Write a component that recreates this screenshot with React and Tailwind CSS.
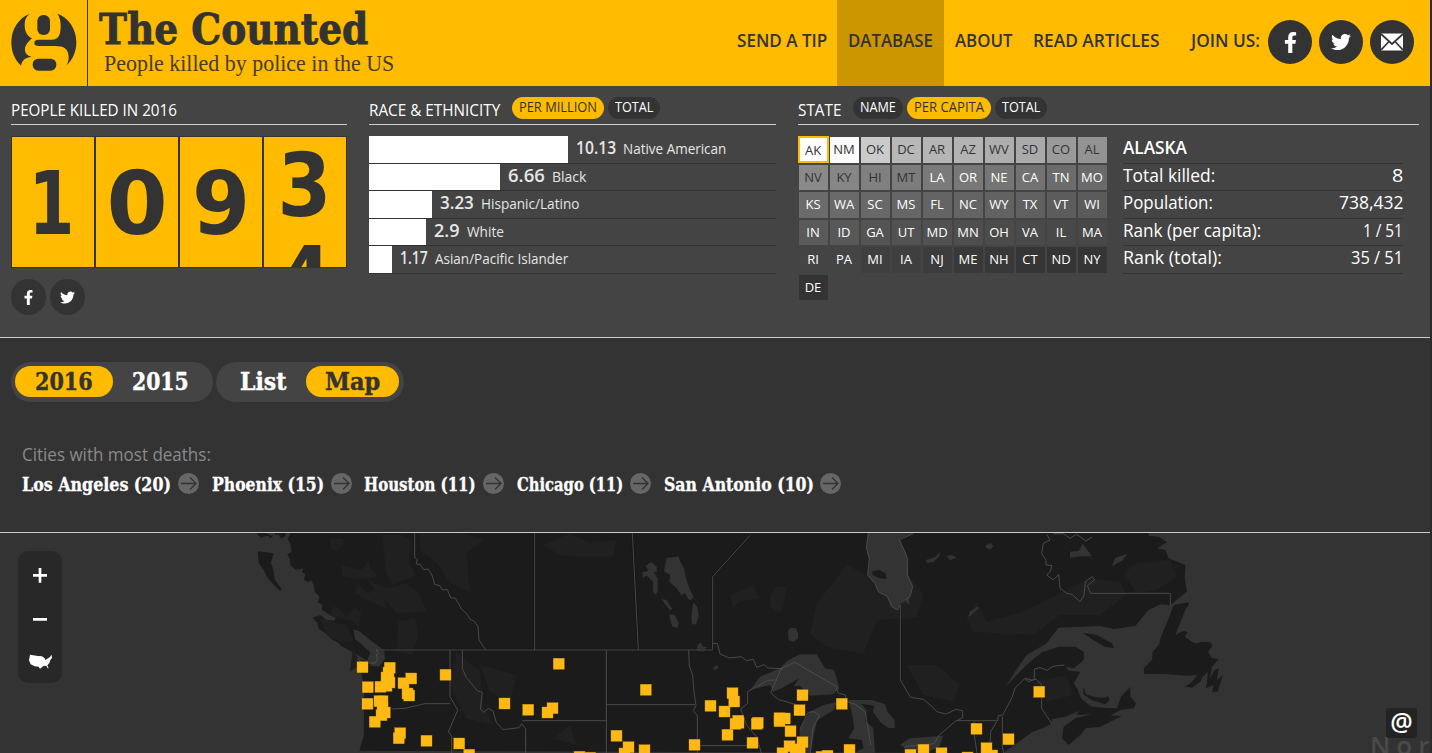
import { useLayoutEffect, useRef, useState } from "react";
import { FaFacebookF, FaTwitter } from "react-icons/fa";

// A line of text condensed or widened to a fixed measure.
function Fit({ w, className = "", children }) {
  const ref = useRef(null);
  const [scale, setScale] = useState(1);
  useLayoutEffect(() => {
    setScale(w / ref.current.offsetWidth);
  }, [w]);
  return (
    <span className={`inline-block whitespace-nowrap ${className}`} style={{ width: w }}>
      <span ref={ref} className="inline-block origin-left" style={{ transform: `scaleX(${scale})` }}>
        {children}
      </span>
    </span>
  );
}

const SERIF = "font-['DejaVu_Serif_Condensed','DejaVu_Serif',serif]";

function GuardianLogo() {
  return (
    <svg className="mt-3 h-[60px] w-[66px]" viewBox="32 36 198 180" fill="#333">
      <path d="M88 41C54 55 33 88 33 127c0 29 11 53 29 70 3-17 12-24 32-27-13-3-20-10-20-21 0-14 9-23 21-34-14-6-22-20-22-39 0-15 4-26 15-35z" />
      <path d="M171 41c34 12 57 46 57 86 0 28-11 53-30 70 5-8 7-16 7-26 0-24-14-33-40-33h-49c-9 0-14-3-14-9 0-7 5-10 14-10h38c22 0 27-16 27-42 0-14-3-27-10-36z" />
      <rect x="111" y="45" width="38" height="60" rx="18" />
      <rect x="97" y="176" width="71" height="36" rx="17" />
    </svg>
  );
}

function MailIcon() {
  return (
    <svg className="h-[18px] w-[22px]" viewBox="0 0 22 18">
      <rect width="22" height="17" y="0.5" fill="#fff" />
      <path d="M0 1l11 10L22 1M0 17l8-8.500M22 17l-8-8.500" fill="none" stroke="#333" strokeWidth="1.700" />
    </svg>
  );
}

function Header() {
  return (
    <header className="flex h-[86px] bg-[#ffbb00] text-[#333]">
      <div className="flex w-[88px] shrink-0 border-r border-[#333] pl-[11px]">
        <GuardianLogo />
      </div>
      <div className="flex flex-col pt-[9px] pl-[11px]">
        <h1 className={`h-[40px] text-[43px] leading-[41px] font-bold [-webkit-text-stroke:0.8px_#333] ${SERIF}`}>
          <Fit w={269}>The Counted</Fit>
        </h1>
        <p className="pl-[5px] font-['Liberation_Serif',serif] text-[24px] leading-7 text-[#483b24]">
          <Fit w={290}>People killed by police in the US</Fit>
        </p>
      </div>
      <nav className="ml-auto flex text-[18px] leading-[81px] font-semibold">
        <a className="pr-[10px]"><Fit w={90}>SEND A TIP</Fit></a>
        <a className="w-[107px] bg-[#cc9600] pl-[11px]"><Fit w={85}>DATABASE</Fit></a>
        <a className="pl-[11px]"><Fit w={57}>ABOUT</Fit></a>
        <a className="pl-[21px]"><Fit w={127}>READ ARTICLES</Fit></a>
        <span className="pl-[31px]"><Fit w={69}>JOIN US:</Fit></span>
      </nav>
      <div className="flex gap-[7px] pt-5 pr-4 pl-2 text-white">
        <a className="flex size-11 items-center justify-center rounded-full bg-[#333]"><FaFacebookF size={21} /></a>
        <a className="flex size-11 items-center justify-center rounded-full bg-[#333]"><FaTwitter size={20} /></a>
        <a className="flex size-11 items-center justify-center rounded-full bg-[#333]"><MailIcon /></a>
      </div>
    </header>
  );
}

function Pill({ w, active, children }) {
  return (
    <button className={`flex h-[22px] rounded-full px-[7px] text-[14px] leading-[20px] ${active ? "bg-[#ffbb00] text-[#333]" : "bg-[#333] text-white"}`}>
      <Fit w={w}>{children}</Fit>
    </button>
  );
}

function PanelHead({ children }) {
  return <div className="flex h-[39px] items-start border-b border-[#ccc] text-[16px] leading-[48px]">{children}</div>;
}

function Digit({ children }) {
  return (
    <div className="h-[132px] w-[84px] overflow-hidden border border-[#333] bg-[#ffbb00] text-center font-['DejaVu_Sans',sans-serif] text-[88px] font-bold text-[#333]">
      {children}
    </div>
  );
}

function KilledPanel() {
  return (
    <section className="w-[336px]">
      <PanelHead><Fit w={166}>PEOPLE KILLED IN 2016</Fit></PanelHead>
      <div className="mt-[11px] flex">
        <Digit><div className="scale-x-75 pr-[4px] leading-[133px]">1</div></Digit>
        <Digit><div className="leading-[133px]">0</div></Digit>
        <Digit><div className="scale-x-95 leading-[133px]">9</div></Digit>
        <Digit>
          <div className="scale-x-88 pr-px leading-[98px]">3</div>
          <div className="scale-x-88 leading-[88px]">4</div>
        </Digit>
      </div>
      <div className="mt-[11px] flex gap-1">
        <a className="flex h-[36px] w-[35px] items-center justify-center rounded-full bg-[#333]"><FaFacebookF size={15} /></a>
        <a className="flex h-[36px] w-[35px] items-center justify-center rounded-full bg-[#333]"><FaTwitter size={15} /></a>
      </div>
    </section>
  );
}

const RACES = [
  { bar: 199, value: "10.13", vw: 40, label: "Native American", lw: 103 },
  { bar: 131, value: "6.66", vw: 37, label: "Black", lw: 34 },
  { bar: 63, value: "3.23", vw: 34, label: "Hispanic/Latino", lw: 98 },
  { bar: 57, value: "2.9", vw: 26, label: "White", lw: 37 },
  { bar: 23, value: "1.17", vw: 28, label: "Asian/Pacific Islander", lw: 133 },
];

function RacePanel() {
  return (
    <section className="ml-[22px] w-[407px]">
      <PanelHead>
        <Fit w={131}>RACE &amp; ETHNICITY</Fit>
        <div className="mt-[11px] ml-3 flex gap-1">
          <Pill w={78} active>PER MILLION</Pill>
          <Pill w={38}>TOTAL</Pill>
        </div>
      </PanelHead>
      <div className="mt-[11.25px]">
        {RACES.map((r) => (
          <div key={r.label} className="flex h-[27.5px] border-b border-[#333]">
            <div className="h-full bg-white" style={{ width: r.bar }} />
            <div className="flex items-baseline gap-[7px] pl-[8px] leading-[23px] text-[#e6e6e6]">
              <Fit w={r.vw} className="text-[18px] font-semibold">{r.value}</Fit>
              <Fit w={r.lw} className="text-[14px]">{r.label}</Fit>
            </div>
          </div>
        ))}
      </div>
    </section>
  );
}

const STATES = "AK NM OK DC AR AZ WV SD CO AL NV KY HI MT LA OR NE CA TN MO KS WA SC MS FL NC WY TX VT WI IN ID GA UT MD MN OH VA IL MA RI PA MI IA NJ ME NH CT ND NY DE".split(" ");
const SHADES = "ff fa cb b8 b5 b3 ae aa 9a 93 8a 86 80 7c 7a 78 75 72 6c 6a 6b 6a 68 66 64 64 62 60 5c 5b 5a 58 54 52 51 4e 4b 4a 49 48 44 44 3f 3f 3c 39 38 35 35 35 33".split(" ");

const DETAILS = [
  ["Total killed:", 92, "8", 11],
  ["Population:", 90, "738,432", 64],
  ["Rank (per capita):", 138, "1 / 51", 40],
  ["Rank (total):", 99, "35 / 51", 52],
];

function StatePanel() {
  return (
    <section className="ml-[22px] w-[621px]">
      <PanelHead>
        <Fit w={43}>STATE</Fit>
        <div className="mt-[11px] ml-3 flex gap-1">
          <Pill w={36}>NAME</Pill>
          <Pill w={70} active>PER CAPITA</Pill>
          <Pill w={38}>TOTAL</Pill>
        </div>
      </PanelHead>
      <div className="flex">
        <div className="mt-[12.25px] ml-px grid h-[163px] w-[308px] grid-cols-[repeat(10,29px)] gap-x-[2px] auto-rows-[25.5px] gap-y-[2px] text-center text-[13px] leading-[24px]">
          {STATES.map((s, i) => (
            <div
              key={s}
              className={`pr-px ${i === 0 ? "-mt-px -ml-px h-[27px] w-[31px] border-2 border-[#ffbb00]" : ""} ${i < 14 ? "text-[#333]" : "text-white"}`}
              style={{ backgroundColor: `#${SHADES[i].repeat(3)}` }}
            >
              {s}
            </div>
          ))}
        </div>
        <div className="mt-[11.25px] ml-[16px] w-[280px] text-[18px] leading-[23px]">
          <div className="h-[27.5px] border-b border-[#333] font-semibold"><Fit w={64}>ALASKA</Fit></div>
          {DETAILS.map(([k, kw, v, vw]) => (
            <div key={k} className="flex h-[27.5px] justify-between border-b border-[#333]">
              <Fit w={kw}>{k}</Fit>
              <Fit w={vw}>{v}</Fit>
            </div>
          ))}
        </div>
      </div>
    </section>
  );
}

const CITIES = [
  ["Los Angeles (20)", 149],
  ["Phoenix (15)", 112],
  ["Houston (11)", 112],
  ["Chicago (11)", 106.5],
  ["San Antonio (10)", 149.5],
];

function Controls() {
  return (
    <section className="h-[195px] border-b border-[#ccc] pt-6">
      <div className={`flex gap-[3px] pl-[11px] text-[25px] leading-[32px] font-bold [-webkit-text-stroke-width:0.4px] ${SERIF}`}>
        <div className="flex h-10 w-[202px] rounded-full bg-[#444] p-1">
          <div className="h-[31px] w-[98px] rounded-full bg-[#ffbb00] pl-5 text-[#333]"><Fit w={58}>2016</Fit></div>
          <div className="pl-[19px]"><Fit w={57}>2015</Fit></div>
        </div>
        <div className="flex h-10 w-[188px] rounded-full bg-[#444] py-1">
          <div className="w-[90px] pl-6"><Fit w={46}>List</Fit></div>
          <div className="h-[31px] w-[93px] rounded-full bg-[#ffbb00] pl-[19px] text-[#333]"><Fit w={55}>Map</Fit></div>
        </div>
      </div>
      <p className="mt-[40px] pl-[22px] text-[18px] leading-[25px] text-[#8a8a8a]"><Fit w={189}>Cities with most deaths:</Fit></p>
      <div className={`mt-[6px] flex gap-[12.5px] pl-[22px] text-[18px] leading-[23px] font-bold [-webkit-text-stroke:0.3px_#fff] ${SERIF}`}>
        {CITIES.map(([name, w]) => (
          <a key={name} className="flex gap-[7px]">
            <Fit w={w}>{name}</Fit>
            <svg className="size-[21px]" viewBox="0 0 21 21">
              <circle cx="10.5" cy="10.5" r="10.5" fill="#666" />
              <path d="M3 10.500h14.500M12 4.500l6 6-6 6" fill="none" stroke="#333" strokeWidth="1.300" />
            </svg>
          </a>
        ))}
      </div>
    </section>
  );
}

// Upper-left corners of the incident markers, in map units (3 per pixel).
const MARKERS = [
  [1071,410],[1087,470],[1086,520],[1153,412],[1149,426],[1143,441],[1125,469],[1143,466],[1152,456],[1122,512],[1131,512],[1131,531],[1138,546],[1108,574],[1128,554],
  [1194,458],[1217,444],[1206,489],[1211,495],[1320,433],[1180,623],[1184,608],[1263,631],[1361,639],[1391,673],[1497,519],[1568,538],[1626,546],[1641,533],[1660,400],[1921,478],[1833,616],[1869,650],[1857,669],[1917,659],[1722,679],[1754,682],[2067,643],[2115,526],[2157,543],[2181,488],[2186,513],[2190,580],[2198,571],[2199,577],[2166,613],[2241,637],
  [2254,580],[2257,577],[2322,563],[2322,572],[2338,564],[2355,602],[2382,539],[2391,494],[2391,635],[2352,647],[2331,668],[2370,658],[2383,656],[2448,679],[2466,676],[2509,520],[2532,658],[2715,673],[2754,658],[2808,668],[2913,595],[3009,626],[2943,653],[2960,675],[2886,681],[3101,484],
];

function MapDrawing() {
  return (
    <svg className="block h-[220px] w-[1430px]" viewBox="0 24 4290 660">
      <g fill="#1b1b1b">
        <path d="M872 24l-9 18 8 14 4 24-13 8 8 16 2 18 16 13 22-5-4 10 10 8-4 17 13 7 8-6 8 14 4 22 13 13-5 17 15 8-3 15 24 14 18 10-4 8-24-3-18-14-23 8 12 14 7 20 22 14 18 18 16 8 12 12 20 10 28 16 24 14 22 3 16 6-64-10 12 40 10 50-2 140-13 44L3010 684 3050 655 3096 622 3126 610 3154 597 3156 583 3196 575 3236 558 3230 570 3276 568 3226 580 3191 605 3186 640 3206 660 3246 625 3256 610 3301 605 3366 573 3331 572 3361 555 3401 550 3408 535 3391 515 3391 485 3363 515 3351 550 3311 548 3276 545 3261 535 3243 520 3231 490 3221 475 3241 440 3206 437 3196 425 3221 430 3251 405 3251 380 3226 365 3176 365 3126 382 3090 410 3050 450 3015 487 3045 440 3080 390 3140 355 3175 308 3300 303 3341 312 3406 303 3446 255 3481 238 3511 240 3561 200 3554 160 3556 120 3506 100 3496 75 3471 70 3501 52 3476 35 3446 32 3446 24z" />
        <path d="M773 79l48 6-8 28 8 24 2 24 22 32-4 4-22-20-16-18-10-20-17-26zM770 24l12 14 22-6 8 8 16-16h30l-4 12-12 4-6-12-22 4-16-8z" />
        <path d="M3566 232L3521 240 3506 280 3481 340 3478 358 3458 380 3456 405 3431 430 3433 447 3496 447 3561 452 3591 450 3576 470 3556 485 3576 488 3601 470 3608 455 3624 440 3622 460 3618 490 3641 480 3636 500 3653 500 3669 450 3651 465 3656 430 3644 435 3630 460 3636 425 3656 402 3636 400 3624 380 3638 362 3631 352 3604 350 3591 355 3578 352 3554 335 3562 322 3551 317 3526 330 3558 250 3566 240z" />
        <path d="M3248 323l40 6 48 26 6 14-28-4-40-24zM3250 486l8 22 26 8 30 2 10-4 6 10-14 14-40-12-26-18z" />
      </g>
      <g fill="#202020">
        <path d="M1147 30l60 0 30 20-10 60 20 40-70 30-20-40zM990 40l40 2 2 16-20 20-22-10zM1025 122l60 12 20-30 10 30 20 22-50 6-60-10zM1070 175l34 30 30-14 22 8-6 18 10 35-70-34-24-14zM985 270l20-28 25 20 6 16 28-30 20 16-10 46-14-20zM960 280l80 20 20 50-40 0-40-20z" />
        <path d="M1260 24h130l60 20-50 40 10 120-60-30-40-60-50-40zM1195 290l50-10 10 50-20 60-46-10zM1100 165l60 25 60-15 40 35 20 50-90 5zM1630 60l80-35 60 30 80-10-10 50-100 0-60-5zM2540 120l60 30 120-4 50 60-20 70-120 10-40 100-110-20-50-40 20-90zM2190 210l70-30 20 40-60 10-20 20zM1060 360l20 60-30 20M2900 280l30-50 30 60 110-30 120-60 80-40 90 10 20 40-80 60-120 0-80 60-180-10zM3370 145l40-30 100-10 20 50-60 40-60 10zM2720 420l90 0 70 60-20 50-90-20zM1640 600l20 40 50-40 20 60-70-20zM1440 420l110 30-20 80-60-30z" />
        <path d="M2310 210l20-25h30l-10 60-10 20-30-20zM1370 380l70 60 10 100 30 60-80-20-50-100zM3100 470l100-20 20 60-80 20z" />
      </g>
      <g fill="#333">
        <path d="M1060 313l18 6 40 32 34 24 3 26-18 24-24-3-10-20 8-20-20-18-26-22z" />
        <path d="M1992 138L2000 98 2032 96 2034 90 2040 108 2052 130 2058 160 2068 190 2080 215 2074 226 2064 222 2056 205 2044 210 2030 190 2008 170 2010 150zM1938 122L1954 111 1970 125 1971 140 1960 142 1973 160 1973 200 1966 210 1959 200 1960 170 1940 152 1928 158 1928 142 1944 138zM1984 222l16 3 16 26-4 6-12-14zM2008 268l16 2 12 24-4 14-14-2-6-16zM2080 232l12 14 4 26-8 26-12 0-2-24z" />
        <path d="M2602 24H2740L2698 42 2714 75 2722 100 2724 150 2738 185 2728 215 2728 240 2715 228 2698 240 2692 255 2675 245 2662 215 2635 200 2625 175 2603 150 2608 110 2599 70z" />
        <path d="M2364 318L2372 308 2388 310 2394 324V340L2382 350 2366 346zM2778 105l26-8 16-16-2 12-18 18-20 2zM2840 94l16-4 14 8-20 8zM2958 60l14-6 8 10-10 10-12-6zM3210 80l26-2 12-22 28 38-34 0-32 4zM3336 122l10-24 36-12-14 20-32 18zM2905 275l4-15 24-15 4 4-22 20zM2138 430l12-10 6 8-10 8zM2092 360l10-8 8 14 10 0-8 14-22-2z" />
        <path d="M2250 495L2280 455 2340 430 2365 405 2400 388 2450 388 2475 430 2502 434 2510 460 2518 490 2500 508 2430 512 2400 482 2380 484 2398 460 2345 490 2320 500 2310 480z" />
        <path d="M2400 612L2430 560 2470 540 2512 530 2500 556 2452 586 2442 626 2432 684H2410L2398 644z" />
        <path d="M2545 525L2615 525 2655 537 2662 560 2684 585 2684 610 2664 608 2640 590 2616 556 2600 558 2596 588 2620 610 2625 684H2595L2585 645 2545 640 2563 610 2555 560z" />
        <path d="M2700 660l30-20 100-8-10 30-34 18-60-6zM2560 684l30-14 20 14z" />
      </g>
      <path d="M2616 140l20-6 20 10 4 18-20-2-22-10zM2585 536l38 6-4 16-20-2z" fill="#1b1b1b" />
      <g fill="none" stroke="#111" strokeWidth="8" opacity=".45">
        <path d="M1604 24v351M1897 24l18 351M1135 375h1010M2138 375V155l112-124M2701 240V465" />
      </g>
      <g fill="none" stroke="#505050" strokeWidth="2.600" strokeLinejoin="round">
        <path d="M1244 24V98L1252 104 1248 116 1262 120 1270 134 1284 132 1296 150 1304 178 1320 182 1326 194 1342 194 1352 218 1366 220 1378 240 1384 252 1400 266 1410 282 1424 290 1434 305 1437 345 1457 375" />
        <path d="M1604 24v351M1897 24l18 351M1072 402l18 12h36l7-14-5-10 8-6-8-9H2138V155L2250 31M2138 356l14-1 8 32 28 12 36-4 16 12 20-4 10 24 22-8 12 10 44 2" />
        <path d="M1350 375v140l23 40-28 66 10 12v51M1175 552l40-2 60-14h76M1387 375v55l12 28 34 40 14 4-6 50 10 10 14-12 14 8 10 34 20 22 48-6 8-12 12 16v72M1567 587h252M1819 375v309M1819 539h266M2066 375l2 48 10 28 4 50 6 40-8 16 12 14v113M2092 662h185M2243 535V500L2303 466 2327 465M2243 535L2222 552 2240 600 2270 636 2284 684M2344 430l-32 74 24 20 50 14M2344 430l40-18 124 72 6 20 22 6 4 20 26 8 30 24 16 98M2400 612l25-50 18-2 16 12-20 34-8 78" />
        <path d="M2606 24L2599 68 2608 100 2603 150 2625 175 2635 200 2662 215 2675 245 2692 255 2701 240V465L2732 517 2770 523 2800 548 2810 560 2838 567 2868 553 2888 557 2888 578 2872 586M2740 26l-42 18 16 36 8 20 0 50 16 35-8 30-14 10" />
        <path d="M3140 28L3150 45 3130 55 3125 85 3138 105 3138 120 3156 122 3150 140 3140 150 3160 165 3176 148 3180 190 3200 205 3216 208 3240 230 3252 212 3256 170 3276 155 3284 165 3262 182 3272 205H3511V241M3160 26l30 0 20 14 20-12 28 20 18-12M2712 670L2722 664 2802 656 2818 630 2868 587H2993L2995 572 3008 570 3035 520 3045 490 3075 460 3085 470 3108 462 3125 480V550L3138 570 3155 595M3075 460l24 6 4-6v-28l18-4 20 8 18-12 34-4M2990 590l-18 30-4 64M3007 575v90l4 19M2923 590v40l8 54" />
      </g>
      <g fill="#ffb914" stroke="#a97a10" strokeWidth="1.500">
        {MARKERS.map(([x, y]) => <rect key={`${x}-${y}`} x={x} y={y} width="33" height="33" />)}
      </g>
      <g fill="#ffb914">
        {MARKERS.map(([x, y]) => <rect key={`${x}-${y}`} x={x + 1} y={y + 1} width="31" height="31" />)}
      </g>
    </svg>
  );
}

function IncidentMap() {
  return (
    <section className="relative h-[220px] overflow-hidden bg-[#333]">
      <MapDrawing />
      <div className="absolute top-[18px] left-[18px] flex h-[132px] w-[44px] flex-col items-center rounded-[10px] bg-[#282828]">
        <svg className="h-[132px] w-[44px]" viewBox="0 0 132 396" fill="#fff">
          <path d="M45 69h17V51h8v18h17v8H70v18h-8V77H45zM45 201h42v8H45z" />
          <path d="M36 311L60 315 72 316 80 322 82 327 90 322 96 318 101 311 102 321 97 327 94 336 88 343 92 352 89 352 85 344 76 345 70 350 66 353 62 347 50 346 38 340 33 328z" />
        </svg>
      </div>
      <div className="absolute top-[197px] left-[1370px] text-[26px] leading-[30px] font-semibold tracking-[6px] text-[#4a4a4a]">Nor</div>
      <div className="absolute top-[175px] left-[1386px] flex h-[30px] w-[31px] items-center justify-center rounded-[3px] bg-[#232323] text-[25px] leading-none font-semibold">
        <span className="-mt-[3px]">@</span>
      </div>
    </section>
  );
}

export default function App() {
  return (
    <div className="h-[753px] w-[1432px] overflow-hidden bg-[#2b2b2b] font-['Open_Sans','Noto_Sans',sans-serif] text-white">
      <div className="w-[1430px] bg-[#333]">
        <Header />
        <div className="flex h-[252px] border-b border-[#ccc] bg-[#444] pl-[11px]">
          <KilledPanel />
          <RacePanel />
          <StatePanel />
        </div>
        <Controls />
        <IncidentMap />
      </div>
    </div>
  );
}
